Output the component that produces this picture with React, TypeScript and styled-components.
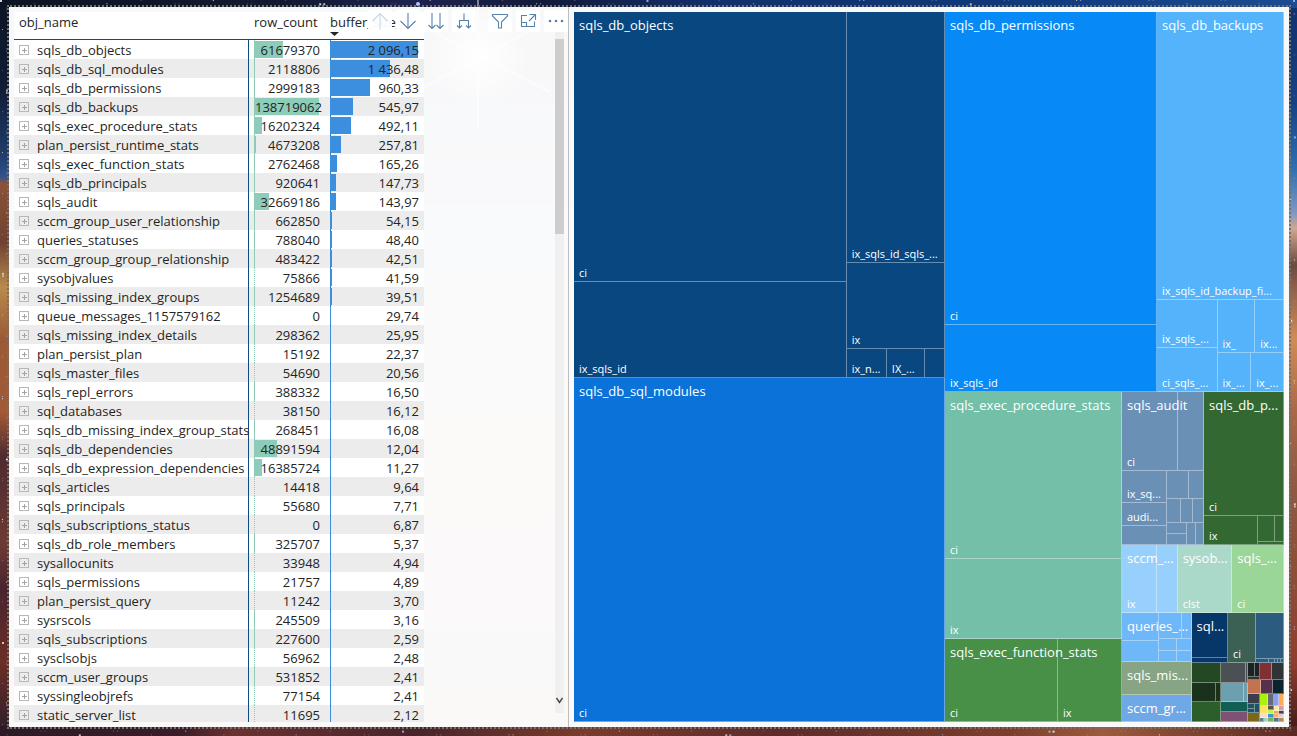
import React from "react";
import styled, { createGlobalStyle } from "styled-components";

const GlobalStyle = createGlobalStyle`
  *, *::before, *::after { box-sizing: border-box; }
  body {
    margin: 0;
    font-family: "Open Sans", "Noto Sans", sans-serif;
    font-size: 13px;
    color: #252423;
  }
  button { font: inherit; }
`;

/* ---------- page and night-sky backdrop ---------- */

const Page = styled.main`
  height: 100vh;
  padding: 5px 6px 7px 7px;
  display: flex;
  position: relative;
  isolation: isolate;
  background:
    linear-gradient(90deg, #0b1422 0%, #111a30 22%, #1d2350 32%, #121a3a 42%, #12306a 55%, #103a7c 80%, #1d4c92 100%) top / 100% 8px no-repeat,
    linear-gradient(90deg, #2c1a26 0%, #3a1d28 14%, #6b3130 18%, #47242b 32%, #7a3b2c 45%, #5d2b2b 60%, #7d3e2c 78%, #9c5b3c 85%, #5b2822 100%) bottom / 100% 10px no-repeat,
    linear-gradient(180deg, #0b1524 0%, #101d35 12%, #1f3c6c 21%, #31538a 24%, #8a5238 25%, #6f4231 33%, #b98a4c 39%, #9a5a35 46%, #a25a37 56%, #4d2b31 62%, #6d3a33 74%, #482430 80%, #6b2f25 90%, #2a1d2c 100%) left / 10px 100% no-repeat,
    linear-gradient(180deg, #12306c 0%, #164284 14%, #2e70b0 23%, #7f98c4 29%, #d0a790 31%, #6c4a40 36%, #8d5f4a 39%, #d08c54 46%, #a86846 56%, #8f5a40 66%, #8d4b35 80%, #8f3d2c 90%, #3d1718 100%) right / 10px 100% no-repeat,
    linear-gradient(180deg, #141c3c 0%, #4a5a86 30%, #80604e 60%, #6a3a34 100%);
`;

const Stars = styled.svg`
  position: absolute;
  inset: 0;
  width: 100%;
  height: 100%;
  z-index: -1;
`;

const starList = Array.from({ length: 200 }, (_, i) => {
  const along = (i * 61.8034) % 100;
  const across = (i * 7) % 8;
  const side = i % 4;
  return {
    x: side < 2 ? `${along}%` : side === 2 ? `${across / 13}%` : `${99.4 + across / 14}%`,
    y: side === 0 ? `${across / 9}%` : side === 1 ? `${98.9 + across / 8}%` : `${along}%`,
    size: i % 9 === 0 ? 2 : 1,
    fill: ["#ffffff", "#ffe6b0", "#c9b6ff", "#ffd0a0", "#9cc4ff"][i % 5],
    opacity: i % 3 === 0 ? 0.8 : 0.35,
  };
});

const Frame = styled.div`
  flex: 1;
  min-width: 0;
  display: flex;
  border: 2px dotted #757069;
`;

const Visual = styled.section<{ $grow: number; $divided?: boolean }>`
  flex: ${(p) => p.$grow} 1 0;
  min-width: 0;
  min-height: 0;
  padding: 5px;
  position: relative;
  display: flex;
  background: rgba(255, 255, 255, 0.97);
  border-right: ${(p) => (p.$divided ? "1px solid #bdbdbd" : "none")};
`;

/* ---------- table visual ---------- */

const TableArea = styled.div`
  flex: 1;
  min-width: 0;
  overflow: hidden;
`;

const Table = styled.table`
  width: 410px;
  table-layout: fixed;
  border-collapse: separate;
  border-spacing: 0;
  background: #fff;
`;

const HeadCell = styled.th<{ $pad: number }>`
  height: 28px;
  padding: 0 0 7px ${(p) => p.$pad}px;
  border-bottom: 1px solid #0f4c81;
  font-weight: 400;
  line-height: 20px;
  text-align: left;
  white-space: nowrap;
  overflow: hidden;
  position: relative;
`;

const SortMark = styled.svg`
  position: absolute;
  left: 0;
  bottom: 3px;
`;

const Row = styled.tr`
  background: #fff;
  &:nth-child(even) { background: #ececec; }
`;

const NameCell = styled.td`
  height: 19px;
  padding: 0 0 0 5px;
  border-right: 1px solid #0f4c81;
  white-space: nowrap;
`;

const NameLine = styled.div`
  display: flex;
  align-items: center;
  gap: 8px;
  height: 19px;
  line-height: 21px;
  padding-top: 1px;
`;

const Expand = styled.button`
  width: 10px;
  height: 10px;
  padding: 0;
  border: 0;
  background: none;
  display: flex;
`;

const ValueCell = styled.td<{ $left: number; $right: number }>`
  padding: 0 ${(p) => p.$right}px 0 ${(p) => p.$left}px;
`;

const Meter = styled.div<{ $axis: string; $line: string }>`
  position: relative;
  height: 19px;
  line-height: 21px;
  text-align: right;
  white-space: nowrap;
  border-left: 1px ${(p) => p.$line} ${(p) => p.$axis};
`;

const Bar = styled.span<{ $color: string }>`
  position: absolute;
  left: -1px;
  top: 1px;
  height: 17px;
  background: ${(p) => p.$color};
`;

const Value = styled.span`
  position: relative;
`;

const rows: [string, number, string][] = [
  ["sqls_db_objects", 61679370, "2 096,15"],
  ["sqls_db_sql_modules", 2118806, "1 436,48"],
  ["sqls_db_permissions", 2999183, "960,33"],
  ["sqls_db_backups", 138719062, "545,97"],
  ["sqls_exec_procedure_stats", 16202324, "492,11"],
  ["plan_persist_runtime_stats", 4673208, "257,81"],
  ["sqls_exec_function_stats", 2762468, "165,26"],
  ["sqls_db_principals", 920641, "147,73"],
  ["sqls_audit", 32669186, "143,97"],
  ["sccm_group_user_relationship", 662850, "54,15"],
  ["queries_statuses", 788040, "48,40"],
  ["sccm_group_group_relationship", 483422, "42,51"],
  ["sysobjvalues", 75866, "41,59"],
  ["sqls_missing_index_groups", 1254689, "39,51"],
  ["queue_messages_1157579162", 0, "29,74"],
  ["sqls_missing_index_details", 298362, "25,95"],
  ["plan_persist_plan", 15192, "22,37"],
  ["sqls_master_files", 54690, "20,56"],
  ["sqls_repl_errors", 388332, "16,50"],
  ["sql_databases", 38150, "16,12"],
  ["sqls_db_missing_index_group_stats", 268451, "16,08"],
  ["sqls_db_dependencies", 48891594, "12,04"],
  ["sqls_db_expression_dependencies", 16385724, "11,27"],
  ["sqls_articles", 14418, "9,64"],
  ["sqls_principals", 55680, "7,71"],
  ["sqls_subscriptions_status", 0, "6,87"],
  ["sqls_db_role_members", 325707, "5,37"],
  ["sysallocunits", 33948, "4,94"],
  ["sqls_permissions", 21757, "4,89"],
  ["plan_persist_query", 11242, "3,70"],
  ["sysrscols", 245509, "3,16"],
  ["sqls_subscriptions", 227600, "2,59"],
  ["sysclsobjs", 56962, "2,48"],
  ["sccm_user_groups", 531852, "2,41"],
  ["syssingleobjrefs", 77154, "2,41"],
  ["static_server_list", 11695, "2,12"],
];

const maxCount = Math.max(...rows.map((r) => r[1]));
const toNumber = (s: string) => parseFloat(s.replace(" ", "").replace(",", "."));
const maxSize = Math.max(...rows.map((r) => toNumber(r[2])));

function DataTable() {
  return (
    <Table>
      <colgroup>
        <col style={{ width: 235 }} />
        <col style={{ width: 81 }} />
        <col style={{ width: 94 }} />
      </colgroup>
      <thead>
        <tr>
          <HeadCell $pad={5}>obj_name</HeadCell>
          <HeadCell $pad={5}>row_count</HeadCell>
          <HeadCell $pad={0} aria-sort="descending">
            buffer_size_
            <SortMark width="9" height="4" viewBox="0 0 9 4">
              <path d="M0 0H9L4.5 4Z" fill="#252423" />
            </SortMark>
          </HeadCell>
        </tr>
      </thead>
      <tbody>
        {rows.map(([name, count, size]) => (
          <Row key={name}>
            <NameCell>
              <NameLine>
                <Expand aria-label={`Expand ${name}`}>
                  <svg width="10" height="10" viewBox="0 0 10 10" fill="none" shapeRendering="crispEdges">
                    <path d="M.5 .5H9.5V9.5H.5Z" stroke="#b8b8b8" />
                    <path d="M5 2.5V7.5M2.5 5H7.5" stroke="#a4a4a4" />
                  </svg>
                </Expand>
                {name}
              </NameLine>
            </NameCell>
            <ValueCell $left={5} $right={10}>
              <Meter $axis="#8dccb9" $line={count > 200000 ? "solid" : "dotted"}>
                <Bar $color="#8dccb9" style={{ width: `${(count / maxCount) * 100}%` }} />
                <Value>{count}</Value>
              </Meter>
            </ValueCell>
            <ValueCell $left={0} $right={5}>
              <Meter $axis="#2f7fc8" $line="solid">
                <Bar $color="#3c8ede" style={{ width: `${(toNumber(size) / maxSize) * 100}%` }} />
                <Value>{size}</Value>
              </Meter>
            </ValueCell>
          </Row>
        ))}
      </tbody>
    </Table>
  );
}

const Toolbar = styled.div`
  position: absolute;
  top: 3px;
  right: 0;
  display: flex;
  gap: 4px;
`;

const ToolGroup = styled.div`
  display: flex;
  gap: 4px;
  margin-right: 8px;
  &:last-child { margin-right: 0; }
`;

const Tool = styled.button<{ $faded?: boolean }>`
  width: 24px;
  height: 22px;
  padding: 0;
  border: 0;
  display: flex;
  align-items: center;
  justify-content: center;
  background: rgba(255, 255, 255, 0.95);
  color: ${(p) => (p.$faded ? "#c9d7e6" : "#5682ad")};
`;

const toolIcons = {
  up: "M9 17.5V1.5M1.5 9L9 1.5L16.5 9",
  down: "M9 1V16.5M1.5 9L9 16.5L16.5 9",
  levels: "M5 1V16.5M1.5 13L5 16.5L8.5 13M13 1V16.5M9.5 13L13 16.5L16.5 13",
  fork: "M9 1.5V8.5M4.5 16V8.5H13.5V16M2 13.5L4.5 16L7 13.5M11 13.5L13.5 16L16 13.5",
  filter: "M1.5 2.5H16.5V4L10.5 10V16H7.5V10L1.5 4Z",
  focus: "M8 3.5H2.5V14.5H15.5V9.5M10.5 2.5H16.5V8M16.5 2.5L10 9M2.5 10.5H7.5V14.5",
};

function ToolIcon({ name }: { name: keyof typeof toolIcons }) {
  return (
    <svg width="18" height="18" viewBox="0 0 18 18" fill="none" stroke="currentColor" strokeWidth="1.1">
      <path d={toolIcons[name]} />
    </svg>
  );
}

const ScrollTrack = styled.div`
  position: absolute;
  top: 24px;
  right: 4px;
  bottom: 14px;
  width: 9px;
  padding-top: 8px;
  display: flex;
  flex-direction: column;
  justify-content: space-between;
  align-items: center;
  background: #f0f0f0;
`;

const ScrollThumb = styled.div`
  width: 100%;
  height: 29%;
  background: #cdcdcd;
`;

const ScrollArrow = styled.button`
  height: 22px;
  width: 9px;
  padding: 6px 1px 0;
  border: 0;
  background: none;
  display: flex;
  align-items: flex-start;
`;

/* ---------- treemap visual ---------- */

type Dir = "row" | "column";

const Box = styled.div<{ $weight: number; $dir: Dir }>`
  flex: ${(p) => p.$weight} 1 0;
  min-width: 0;
  min-height: 0;
  display: flex;
  flex-direction: ${(p) => p.$dir};
  position: relative;
`;

const Tile = styled.div<{ $weight: number; $color: string }>`
  flex: ${(p) => p.$weight} 1 0;
  min-width: 0;
  min-height: 0;
  display: flex;
  align-items: flex-end;
  overflow: hidden;
  background: ${(p) => p.$color};
  box-shadow: inset -1px -1px 0 rgba(255, 255, 255, 0.38);
`;

const TileLabel = styled.span`
  margin-left: 5px;
  font-size: 11px;
  line-height: 18px;
  color: #fff;
  white-space: nowrap;
`;

const GroupTitle = styled.span`
  position: absolute;
  top: 4px;
  left: 5px;
  line-height: 19px;
  color: #fff;
  white-space: nowrap;
`;

type Node = { w: number; dir?: Dir; kids?: Node[]; color?: string; label?: string; title?: string };
type Opts = { color?: string; title?: string };

const leaf = (w: number, label?: string, color?: string): Node => ({ w, label, color });
const cols = (w: number, kids: Node[], o: Opts = {}): Node => ({ w, dir: "row", kids, ...o });
const stack = (w: number, kids: Node[], o: Opts = {}): Node => ({ w, dir: "column", kids, ...o });
const plain = (...ws: number[]) => ws.map((w) => leaf(w));
const shade = (w: number, color: string) => leaf(w, undefined, color);

const objects = cols(366, [
  stack(272, [leaf(270, "ci"), leaf(96, "ix_sqls_id")]),
  stack(98, [
    leaf(251, "ix_sqls_id_sqls_..."),
    leaf(86, "ix"),
    cols(29, [leaf(40, "ix_n..."), leaf(38, "IX_..."), leaf(20)]),
  ]),
], { color: "#094780", title: "sqls_db_objects" });

const modules = cols(344, [leaf(1, "ci")], { color: "#0b72d9", title: "sqls_db_sql_modules" });

const permissions = stack(212, [leaf(313, "ci"), leaf(67, "ix_sqls_id")], {
  color: "#088af6",
  title: "sqls_db_permissions",
});

const backups = stack(127, [
  leaf(288, "ix_sqls_id_backup_fi..."),
  cols(92, [
    stack(61, [leaf(48, "ix_sqls_..."), leaf(44, "ci_sqls_...")]),
    stack(67, [
      cols(53, [leaf(38, "ix_"), leaf(29, "ix...")]),
      cols(39, [leaf(34, "ix_..."), leaf(33, "ix_...")]),
    ]),
  ]),
], { color: "#54b3fb", title: "sqls_db_backups" });

const audit = stack(82, [
  cols(79, [leaf(56, "ci"), leaf(26)]),
  cols(74, [
    stack(45, [leaf(32, "ix_sq..."), leaf(23, "audi..."), leaf(19)]),
    stack(37, [
      cols(28, plain(22, 15)),
      cols(24, plain(14, 12, 11)),
      cols(22, [stack(20, plain(11, 11)), leaf(9), leaf(8)]),
    ]),
  ]),
], { color: "#6b90b6", title: "sqls_audit" });

const principals = stack(80, [
  leaf(124, "ci"),
  cols(29, [leaf(55, "ix"), stack(26, [cols(26, plain(17, 9)), leaf(3)])]),
], { color: "#336832", title: "sqls_db_p..." });

const mosaic = stack(24, [
  cols(11, [shade(8, "#acf00e"), shade(6, "#666b76"), shade(5, "#8c9fee"), shade(5, "#ffab52")]),
  cols(8, [
    shade(8, "#ffdf68"),
    stack(6, [shade(4, "#5b4f4c"), shade(4, "#bdf646")]),
    stack(5, [shade(5, "#ffe7a3"), shade(3, "#e9a16a")]),
    stack(5, [shade(5, "#d69bae"), shade(3, "#463b4e")]),
  ]),
  cols(8, [
    stack(8, [shade(5, "#f1dfcb"), cols(4, [shade(4, "#587f8b"), shade(4, "#a9c9c4")])]),
    stack(6, [shade(4, "#3a94d3"), shade(4, "#77b255")]),
    stack(5, [shade(4, "#ffb36a"), shade(4, "#50708c")]),
    stack(5, [shade(4, "#d0d4db"), shade(4, "#bd8455")]),
  ]),
]);

const smallTiles = cols(60, [
  stack(30, [
    shade(21, "#244823"),
    cols(19, [shade(25, "#1a321b"), shade(5, "#1a321b")]),
    shade(20, "#2c5e2c"),
  ]),
  stack(27, [
    cols(21, [shade(25, "#4a5054"), shade(2, "#4a5054")]),
    cols(19, [shade(23, "#6c9fb0"), shade(4, "#6c9fb0")]),
    shade(10, "#115e55"),
    shade(10, "#7f5174"),
  ]),
  stack(37, [
    cols(18, [
      stack(13, [cols(15, [shade(8, "#1b2224"), shade(5, "#1b2224")]), shade(3, "#2a3234")]),
      shade(12, "#812f30"),
      shade(12, "#303437"),
    ]),
    cols(14, [shade(14, "#c27350"), shade(12, "#54324b"), shade(11, "#0c252c")]),
    cols(28, [
      stack(13, [
        shade(10, "#3a3e4c"),
        cols(9, [stack(8, [shade(5, "#1e5264"), shade(4, "#1e5264")]), shade(5, "#1e5264")]),
        shade(9, "#7c661a"),
      ]),
      mosaic,
    ]),
  ]),
]);

const tree: Node[] = [
  stack(371, [objects, modules]),
  stack(339, [
    cols(380, [permissions, backups]),
    cols(330, [
      stack(177, [
        stack(247, [leaf(167, "ci"), leaf(80, "ix")], { color: "#73bfa8", title: "sqls_exec_procedure_stats" }),
        cols(83, [leaf(113, "ci"), leaf(64, "ix")], { color: "#488f48", title: "sqls_exec_function_stats" }),
      ]),
      stack(162, [
        cols(153, [audit, principals]),
        cols(68, [
          cols(56, [leaf(35, "ix"), leaf(21)], { color: "#98d0fd", title: "sccm_..." }),
          cols(55, [leaf(1, "clst")], { color: "#aad8c9", title: "sysob..." }),
          cols(52, [leaf(1, "ci")], { color: "#9ad697", title: "sqls_..." }),
        ]),
        cols(109, [
          stack(70, [
            cols(49, [
              stack(37, plain(28, 21)),
              stack(32, [cols(26, plain(22, 10)), cols(12, plain(18, 14)), cols(11, plain(18, 14))]),
            ], { color: "#6eb7f9", title: "queries_..." }),
            cols(33, [leaf(1)], { color: "#87a485", title: "sqls_mis..." }),
            cols(27, [leaf(1)], { color: "#6ea8e7", title: "sccm_gr..." }),
          ]),
          stack(93, [
            cols(50, [
              stack(37, plain(45, 5), { color: "#073768", title: "sql..." }),
              cols(29, [leaf(1, "ci")], { color: "#3b6155" }),
              stack(28, [leaf(46), cols(4, plain(13, 6, 3, 3, 3))], { color: "#2c5b80" }),
            ]),
            smallTiles,
          ]),
        ]),
      ]),
    ]),
  ]),
];

function TreeNode({ node, color }: { node: Node; color: string }) {
  const fill = node.color ?? color;
  if (!node.kids) {
    return (
      <Tile $weight={node.w} $color={fill}>
        {node.label && <TileLabel>{node.label}</TileLabel>}
      </Tile>
    );
  }
  return (
    <Box $weight={node.w} $dir={node.dir ?? "row"}>
      {node.kids.map((kid, i) => (
        <TreeNode key={i} node={kid} color={fill} />
      ))}
      {node.title && <GroupTitle>{node.title}</GroupTitle>}
    </Box>
  );
}

export default function App() {
  return (
    <Page>
      <GlobalStyle />
      <Stars aria-hidden="true">
        {starList.map((s, i) => (
          <rect key={i} x={s.x} y={s.y} width={s.size} height={s.size} fill={s.fill} opacity={s.opacity} />
        ))}
        <radialGradient id="glow">
          <stop offset="0" stopColor="#fff" stopOpacity="0.9" />
          <stop offset="1" stopColor="#fff" stopOpacity="0" />
        </radialGradient>
        <circle cx="478" cy="55" r="50" fill="url(#glow)" />
        <path d="M478 0V130M420 25L550 92M415 92L545 22" stroke="#fff" strokeOpacity="0.45" strokeWidth="2" />
        <circle cx="418" cy="4" r="2" fill="#b9c2ff" />
      </Stars>
      <Frame>
        <Visual $grow={549} $divided aria-label="Objects table">
          <TableArea>
            <DataTable />
          </TableArea>
          <ScrollTrack>
            <ScrollThumb />
            <ScrollArrow aria-label="Scroll down">
              <svg width="7" height="7" viewBox="0 0 7 7" fill="none" stroke="#444" strokeWidth="1.4">
                <path d="M.5 1L3.5 5.5L6.5 1" />
              </svg>
            </ScrollArrow>
          </ScrollTrack>
          <Toolbar>
            <ToolGroup>
              <Tool $faded aria-label="Drill up"><ToolIcon name="up" /></Tool>
              <Tool aria-label="Drill down"><ToolIcon name="down" /></Tool>
              <Tool aria-label="Go to the next level"><ToolIcon name="levels" /></Tool>
              <Tool aria-label="Expand all one level"><ToolIcon name="fork" /></Tool>
            </ToolGroup>
            <ToolGroup>
              <Tool aria-label="Filters"><ToolIcon name="filter" /></Tool>
              <Tool aria-label="Focus mode"><ToolIcon name="focus" /></Tool>
              <Tool aria-label="More options">
                <svg width="16" height="4" viewBox="0 0 16 4" fill="currentColor">
                  <circle cx="2" cy="2" r="1.3" />
                  <circle cx="8" cy="2" r="1.3" />
                  <circle cx="14" cy="2" r="1.3" />
                </svg>
              </Tool>
            </ToolGroup>
          </Toolbar>
        </Visual>
        <Visual $grow={710} aria-label="Index treemap">
          {tree.map((node, i) => (
            <TreeNode key={i} node={node} color="#094780" />
          ))}
        </Visual>
      </Frame>
    </Page>
  );
}
